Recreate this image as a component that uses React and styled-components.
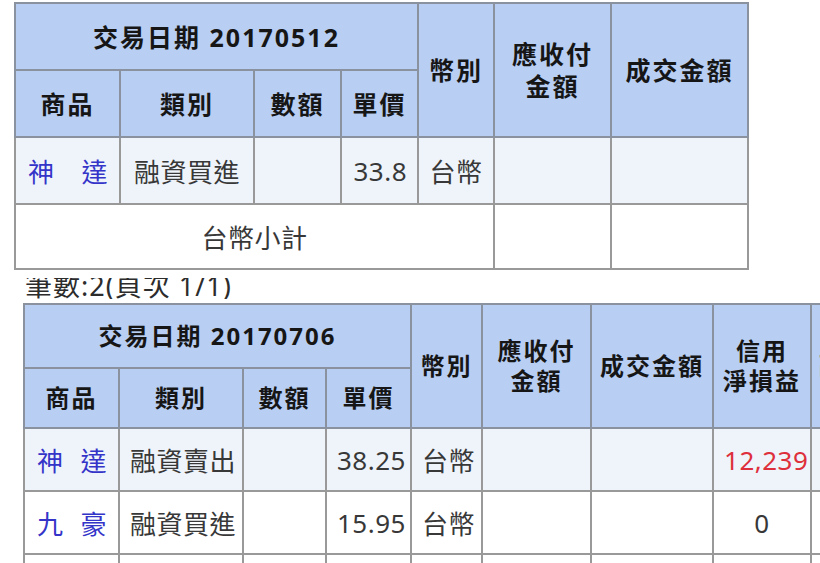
import React from "react"
import styled, { createGlobalStyle } from "styled-components"

const GlobalStyle = createGlobalStyle`
  html, body {
    margin: 0;
    padding: 0;
    background: #fff;
    overflow: hidden;
  }
  body {
    font-family: "Noto Sans", "Noto Sans CJK TC", sans-serif;
  }
`

const Page = styled.div`
  width: 820px;
  height: 563px;
  overflow: hidden;
  padding: 2px 0 0 14px;
  box-sizing: border-box;
`

const Sheet = styled.table`
  border-collapse: collapse;
  table-layout: fixed;
  width: ${(p) => p.$width}px;
  margin-left: ${(p) => p.$indent || 0}px;
  border: 2px solid #7a7a7a;
  font-size: ${(p) => p.$head}px;
`

const Col = styled.col`
  width: ${(p) => p.$w}px;
`

const Row = styled.tr`
  height: ${(p) => p.$h}px;
  background: ${(p) => (p.$shade ? "#eff4fa" : "#fff")};
`

const Head = styled.th`
  background: #b8cef3;
  border: 2px solid #8a929f;
  color: #161616;
  font-weight: 700;
  text-align: center;
  padding: 0;
  line-height: ${(p) => p.$lh || 1.2};
  letter-spacing: 2px;
  white-space: nowrap;
`

const Cell = styled.td`
  border: 2px solid #999;
  font-size: 26px;
  padding: 0 10px;
  text-align: ${(p) => p.$align || "center"};
  letter-spacing: 0.5px;
  white-space: nowrap;
  color: ${(p) => (p.$loss ? "#de2f3c" : "#383838")};
`

const Stock = styled.div`
  display: flex;
  justify-content: space-between;
  color: #3434c9;
  padding: 0 1px 0 2px;
`

const Caption = styled.div`
  height: 21px;
  margin: 8px 0 4px 11px;
  overflow: hidden;
  display: flex;
  align-items: flex-end;
  font-size: 27px;
  line-height: 27px;
  letter-spacing: 1px;
  color: #2c2c2c;
`

const StockName = ({ chars }) => (
  <Stock>
    {chars.map((c) => (
      <span key={c}>{c}</span>
    ))}
  </Stock>
)

const firstCols = [105, 134, 87, 77, 76, 117, 137]
const secondCols = [95, 124, 83, 85, 71, 109, 122, 98, 120]

const App = () => {
  return (
    <Page>
      <GlobalStyle />
      <Sheet $width={733} $head={25}>
        <colgroup>
          {firstCols.map((w, i) => (
            <Col key={i} $w={w} />
          ))}
        </colgroup>
        <tbody>
          <Row $h={67}>
            <Head colSpan={4}>交易日期 20170512</Head>
            <Head rowSpan={2}>幣別</Head>
            <Head rowSpan={2} $lh={1.3}>
              應收付
              <br />
              金額
            </Head>
            <Head rowSpan={2}>成交金額</Head>
          </Row>
          <Row $h={67}>
            <Head>商品</Head>
            <Head>類別</Head>
            <Head>數額</Head>
            <Head>單價</Head>
          </Row>
          <Row $h={67} $shade>
            <Cell>
              <StockName chars={["神", "達"]} />
            </Cell>
            <Cell>融資買進</Cell>
            <Cell />
            <Cell $align="right">33.8</Cell>
            <Cell>台幣</Cell>
            <Cell />
            <Cell />
          </Row>
          <Row $h={65}>
            <Cell colSpan={5}>台幣小計</Cell>
            <Cell />
            <Cell />
          </Row>
        </tbody>
      </Sheet>

      <Caption>筆數:2(頁次 1/1)</Caption>

      <Sheet $width={907} $indent={9} $head={24}>
        <colgroup>
          {secondCols.map((w, i) => (
            <Col key={i} $w={w} />
          ))}
        </colgroup>
        <tbody>
          <Row $h={64}>
            <Head colSpan={4}>交易日期 20170706</Head>
            <Head rowSpan={2}>幣別</Head>
            <Head rowSpan={2} $lh={1.25}>
              應收付
              <br />
              金額
            </Head>
            <Head rowSpan={2}>成交金額</Head>
            <Head rowSpan={2} $lh={1.25}>
              信用
              <br />
              淨損益
            </Head>
            <Head rowSpan={2}>融資金額</Head>
          </Row>
          <Row $h={60}>
            <Head>商品</Head>
            <Head>類別</Head>
            <Head>數額</Head>
            <Head>單價</Head>
          </Row>
          <Row $h={63} $shade>
            <Cell>
              <StockName chars={["神", "達"]} />
            </Cell>
            <Cell>融資賣出</Cell>
            <Cell />
            <Cell $align="right">38.25</Cell>
            <Cell>台幣</Cell>
            <Cell />
            <Cell />
            <Cell $loss>12,239</Cell>
            <Cell />
          </Row>
          <Row $h={63}>
            <Cell>
              <StockName chars={["九", "豪"]} />
            </Cell>
            <Cell>融資買進</Cell>
            <Cell />
            <Cell $align="right">15.95</Cell>
            <Cell>台幣</Cell>
            <Cell />
            <Cell />
            <Cell>0</Cell>
            <Cell />
          </Row>
          <Row $h={63}>
            <Cell />
            <Cell />
            <Cell />
            <Cell />
            <Cell />
            <Cell />
            <Cell />
            <Cell />
            <Cell />
          </Row>
        </tbody>
      </Sheet>
    </Page>
  )
}

export default App
